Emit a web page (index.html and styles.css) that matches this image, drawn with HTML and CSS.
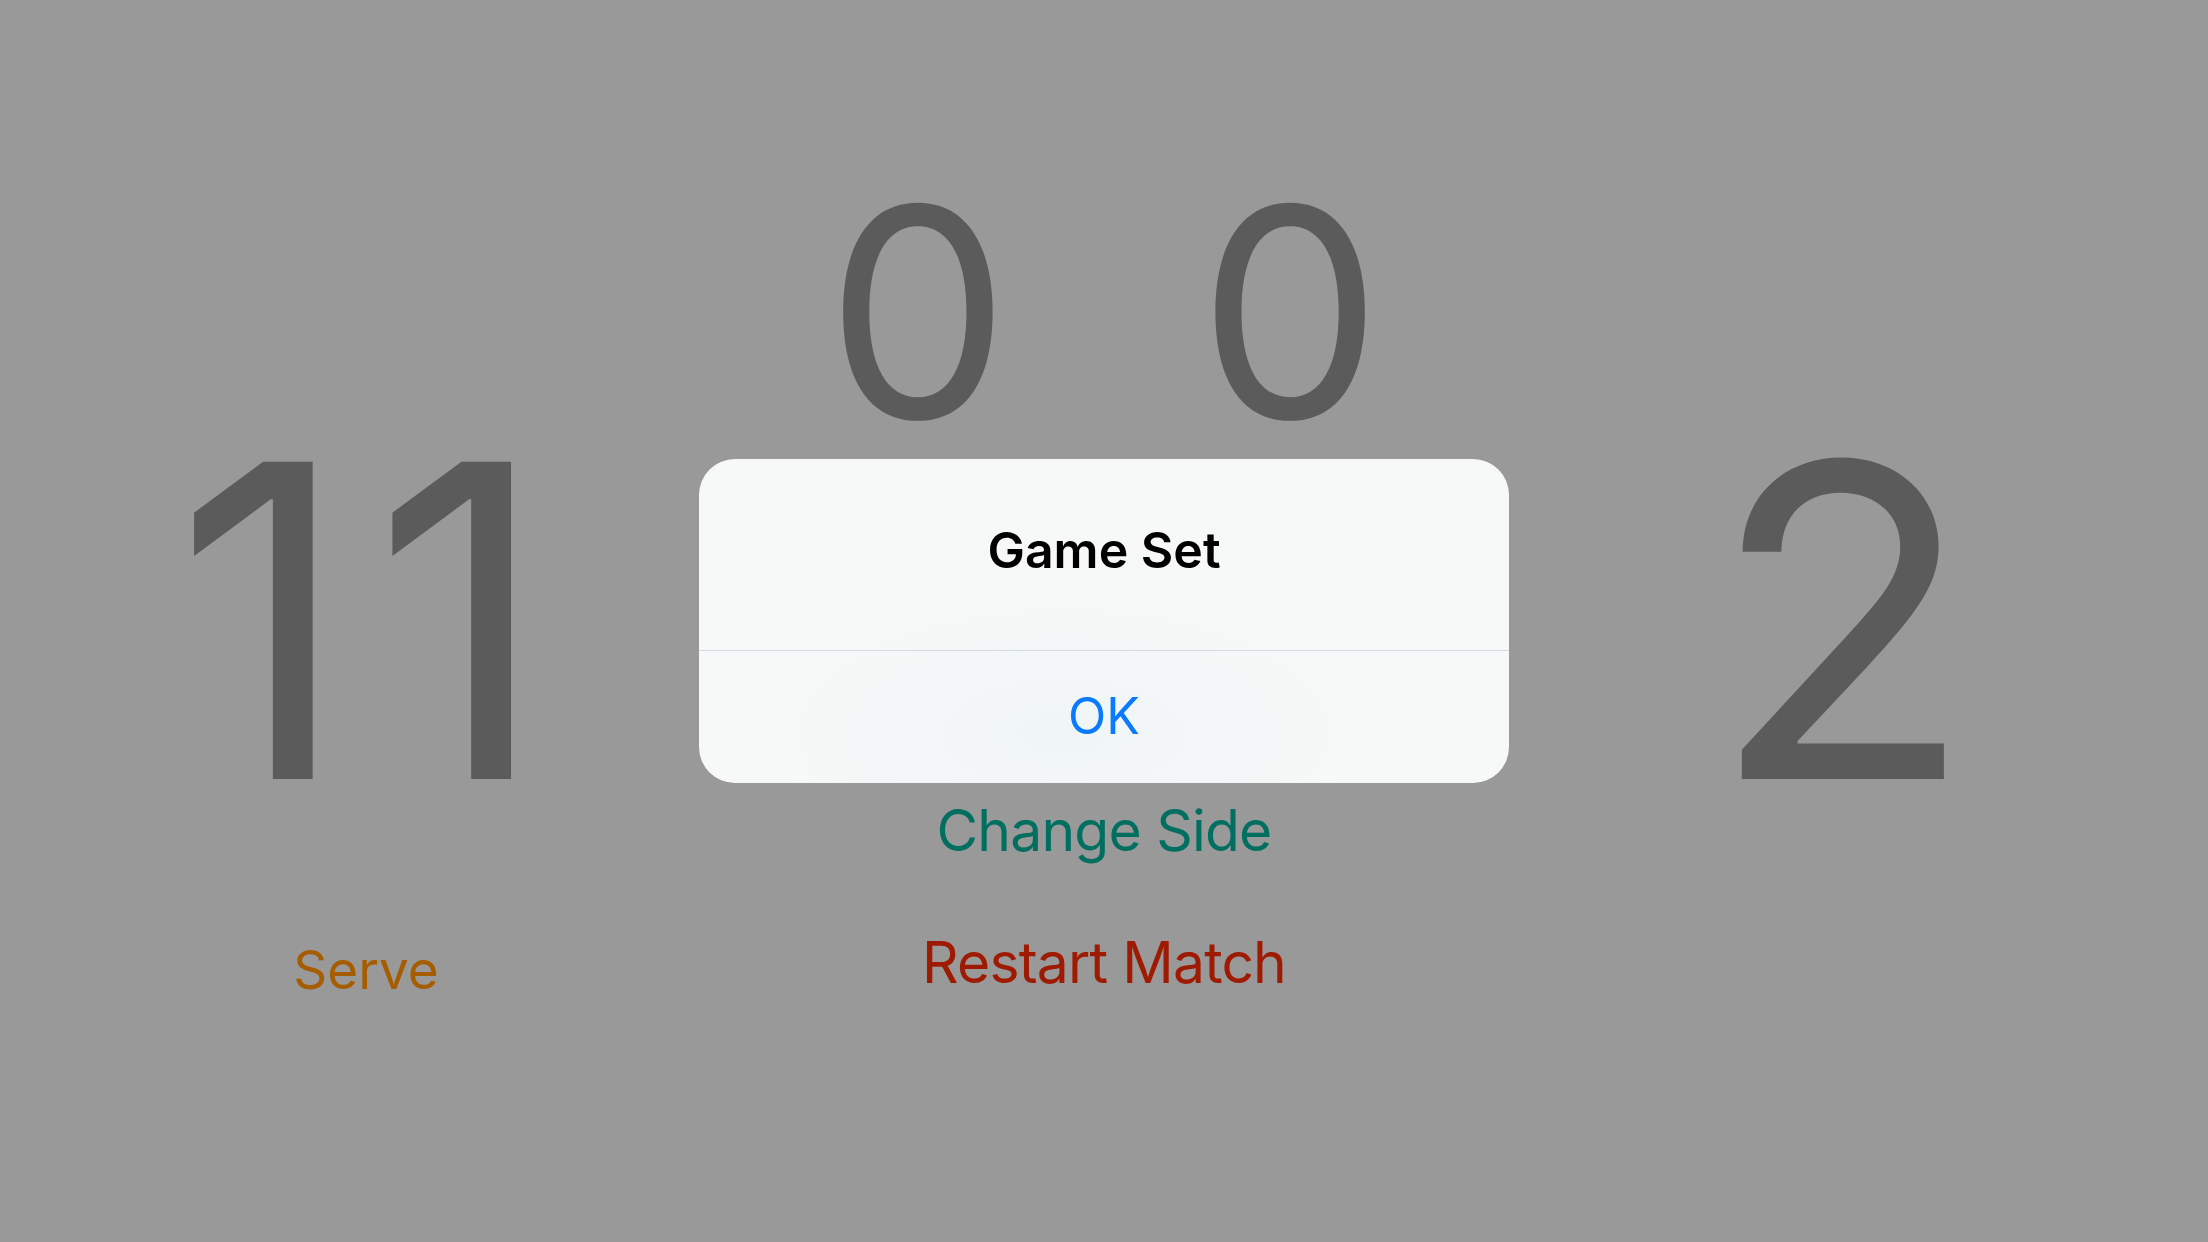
FILE: index.html
```html
<!DOCTYPE html>
<html>
<head>
<meta charset="utf-8">
<link rel="stylesheet" href="styles.css">
</head>
<body>
<div class="screen">
  <div class="col side">
    <div class="score score-wide">11</div>
    <div class="action serve">Serve</div>
  </div>
  <div class="col middle">
    <div class="sets">
      <span class="set">0</span>
      <span class="set">0</span>
    </div>
    <div class="action change">Change Side</div>
    <div class="action restart">Restart Match</div>
  </div>
  <div class="col side">
    <div class="score">2</div>
  </div>

  <div class="alert">
    <div class="alert-title">Game Set</div>
    <div class="alert-sep"></div>
    <div class="alert-btn">OK</div>
  </div>
</div>
</body>
</html>
```

FILE: styles.css
```css
html, body {
  margin: 0;
  padding: 0;
}

body {
  background: #999999;
  font-family: "Inter", "Roboto", "Liberation Sans", sans-serif;
}

.screen {
  position: relative;
  width: 2208px;
  height: 1242px;
  background: #999999;
  display: grid;
  grid-template-columns: 732px 744px 732px;
  overflow: hidden;
}

.col {
  display: flex;
  flex-direction: column;
  align-items: center;
}

.side {
  padding-top: 403px;
}

.score {
  font-size: 436px;
  line-height: 1;
  color: #5b5b5b;
  letter-spacing: 0;
}

.score-wide {
  letter-spacing: 21px;
  padding-left: 12px;
}

.middle {
  padding-top: 166px;
}

.sets {
  display: flex;
  gap: 188px;
  font-size: 292px;
  line-height: 1;
  color: #5b5b5b;
}

.action {
  font-size: 57px;
  line-height: 1;
  white-space: nowrap;
}

.serve {
  font-size: 53px;
  color: #a65d00;
  margin-top: 105px;
}

.change {
  color: #006f60;
  margin-top: 344px;
  letter-spacing: -0.8px;
}

.restart {
  color: #9e1a00;
  margin-top: 75px;
  letter-spacing: -0.85px;
}

.alert {
  position: absolute;
  left: 699px;
  top: 459px;
  width: 810px;
  height: 324px;
  border-radius: 36px;
  background: radial-gradient(ellipse 60% 70% at 45% 85%, #eff5f5 0%, #f7f8f8 60%);
  display: flex;
  flex-direction: column;
  overflow: hidden;
}

.alert-title {
  height: 191px;
  display: flex;
  align-items: center;
  justify-content: center;
  padding-bottom: 10px;
  box-sizing: border-box;
  font-size: 50px;
  font-weight: 600;
  color: #000000;
}

.alert-sep {
  height: 1px;
  background: #d3dcdc;
}

.alert-btn {
  flex: 1;
  display: flex;
  align-items: center;
  justify-content: center;
  padding-bottom: 2px;
  font-size: 50px;
  color: #0a7aff;
}
```
